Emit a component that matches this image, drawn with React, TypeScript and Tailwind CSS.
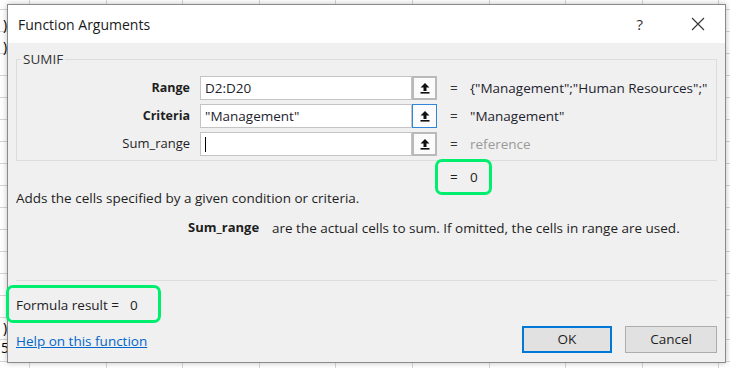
import React from "react";

const font = "font-['Open_Sans','Noto_Sans',sans-serif]";

function PickIcon() {
  return (
    <svg width="10" height="11" viewBox="0 0 10 11">
      <path d="M5 0 L9.5 4.5 H6.5 V8 H3.5 V4.5 H0.5 Z" fill="#111" />
      <rect x="0.5" y="9" width="9" height="1.6" fill="#111" />
    </svg>
  );
}

interface ArgRowProps {
  label: string;
  bold?: boolean;
  input: string;
  value: string;
  grey?: boolean;
  focused?: boolean;
  cursor?: boolean;
}

function ArgRow({ label, bold, input, value, grey, focused, cursor }: ArgRowProps) {
  return (
    <div className="flex items-center h-[24px]">
      <div
        className={`w-[173px] text-right text-[#1e1e1e] ${
          bold ? "font-bold text-[12.5px]" : "text-[13px]"
        }`}
      >
        {label}
      </div>
      <div className="ml-[10px] flex h-[24px]">
        <div className="w-[212px] h-full bg-white border border-[#c4c4c4] flex items-center pl-[4px] text-[13.5px] text-[#1e1e2e] whitespace-nowrap">
          {cursor ? <span className="w-px h-[15px] bg-black" /> : input}
        </div>
        <div
          className={`w-[25px] h-full flex items-center justify-center bg-[#fbfbfb] ${
            focused ? "border border-[#2f86dc]" : "border-2 border-[#b9b9b9]"
          }`}
        >
          <PickIcon />
        </div>
      </div>
      <div className="ml-[13px] w-[20px] text-[13.5px] text-[#333]">=</div>
      <div
        className={`w-[237px] overflow-hidden whitespace-nowrap text-[13.5px] ${
          grey ? "text-[#9a9a9a]" : "text-[#1e1e2e]"
        }`}
      >
        {value}
      </div>
    </div>
  );
}

export default function App() {
  return (
    <div
      className={`relative w-[730px] h-[368px] overflow-hidden bg-white ${font} bg-[image:repeating-linear-gradient(90deg,transparent_0_29px,#d6d6d6_29px_30px,transparent_30px_76.6px),repeating-linear-gradient(180deg,transparent_0_9px,#d6d6d6_9px_10px,transparent_10px_22px)]`}
    >
      {/* cell text peeking out from under the dialog */}
      <span className="absolute left-[3px] top-[16px] text-[14px] leading-[18px] text-black">)</span>
      <span className="absolute left-[3px] top-[38px] text-[14px] leading-[18px] text-black">)</span>
      <span className="absolute left-[3px] top-[319px] text-[14px] leading-[18px] text-black">)</span>
      <span className="absolute left-[1px] top-[339px] text-[14px] leading-[18px] text-black">5</span>

      {/* dialog window */}
      <div className="absolute left-[7px] top-[4px] w-[719px] h-[359px] border border-[#8a8a8a] shadow-[0_0_6px_rgba(0,0,0,0.25)] flex flex-col bg-[#f0f0f0]">
        <div className="h-[38px] bg-white flex items-center pl-[10px] pr-[20px]">
          <div className="text-[14px] text-[#1a1a1a] flex-1">Function Arguments</div>
          <div className="text-[15px] text-[#333] mr-[48px]">?</div>
          <svg width="14" height="14" viewBox="0 0 14 14">
            <path d="M1 1 L13 13 M13 1 L1 13" stroke="#333" strokeWidth="1.1" />
          </svg>
        </div>

        <div className="flex-1 flex flex-col px-[8px]">
          <fieldset className="mt-[8px] border border-[#dcdcdc] pt-[9px] pb-[4px] flex flex-col gap-[4px]">
            <legend className="ml-[4px] px-[2px] text-[13.5px] leading-[16px] text-[#333]">SUMIF</legend>
            <ArgRow
              label="Range"
              bold
              input="D2:D20"
              value={'{"Management";"Human Resources";"Management";"Sales"}'}
            />
            <ArgRow label="Criteria" bold input={'"Management"'} value={'"Management"'} focused />
            <ArgRow label="Sum_range" input="" value="reference" grey cursor />
          </fieldset>

          <div className="mt-[6px] h-[20px] flex items-center pl-[434px] text-[13.5px] text-[#1e1e1e]">
            <span className="relative">
              <span className="w-[20px] inline-block">=</span>
              <span>0</span>
              <span className="absolute -left-[15px] -top-[8px] w-[57px] h-[36px] border-[3px] border-[#00ee6e] rounded-[7px]" />
            </span>
          </div>

          <div className="mt-[3px] h-[16px] flex items-center text-[13.5px] text-[#1e1e1e] whitespace-nowrap">
            Adds the cells specified by a given condition or criteria.
          </div>

          <div className="mt-[14px] h-[16px] flex items-center text-[13.5px] text-[#1e1e1e] whitespace-nowrap">
            <span className="ml-[172px] w-[84px] font-bold text-[13px]">Sum_range</span>
            <span>are the actual cells to sum. If omitted, the cells in range are used.</span>
          </div>

          <div className="mt-[44px] h-px bg-[#dcdcdc]" />

          <div className="flex-1 flex justify-between">
            <div className="flex flex-col">
              <div className="relative mt-[16px] h-[16px] flex items-center text-[13.5px] text-[#1e1e1e] whitespace-nowrap">
                <span className="w-[114px] inline-block">Formula result =</span>
                <span>0</span>
                <span className="absolute -left-[10px] -top-[12px] w-[155px] h-[38px] border-[3px] border-[#00ee6e] rounded-[7px]" />
              </div>
              <a href="#" className="mt-[20px] h-[16px] flex items-center text-[13.5px] text-[#0066cc] underline">
                Help on this function
              </a>
            </div>
            <div className="flex items-end gap-[13px] pb-[9px]">
              <button className="w-[90px] h-[27px] bg-[#e1e1e1] border-2 border-[#0078d7] text-[13.5px] text-[#1e1e1e]">
                OK
              </button>
              <button className="w-[92px] h-[27px] bg-[#e1e1e1] border border-[#adadad] text-[13.5px] text-[#1e1e1e]">
                Cancel
              </button>
            </div>
          </div>
        </div>
      </div>
    </div>
  );
}
